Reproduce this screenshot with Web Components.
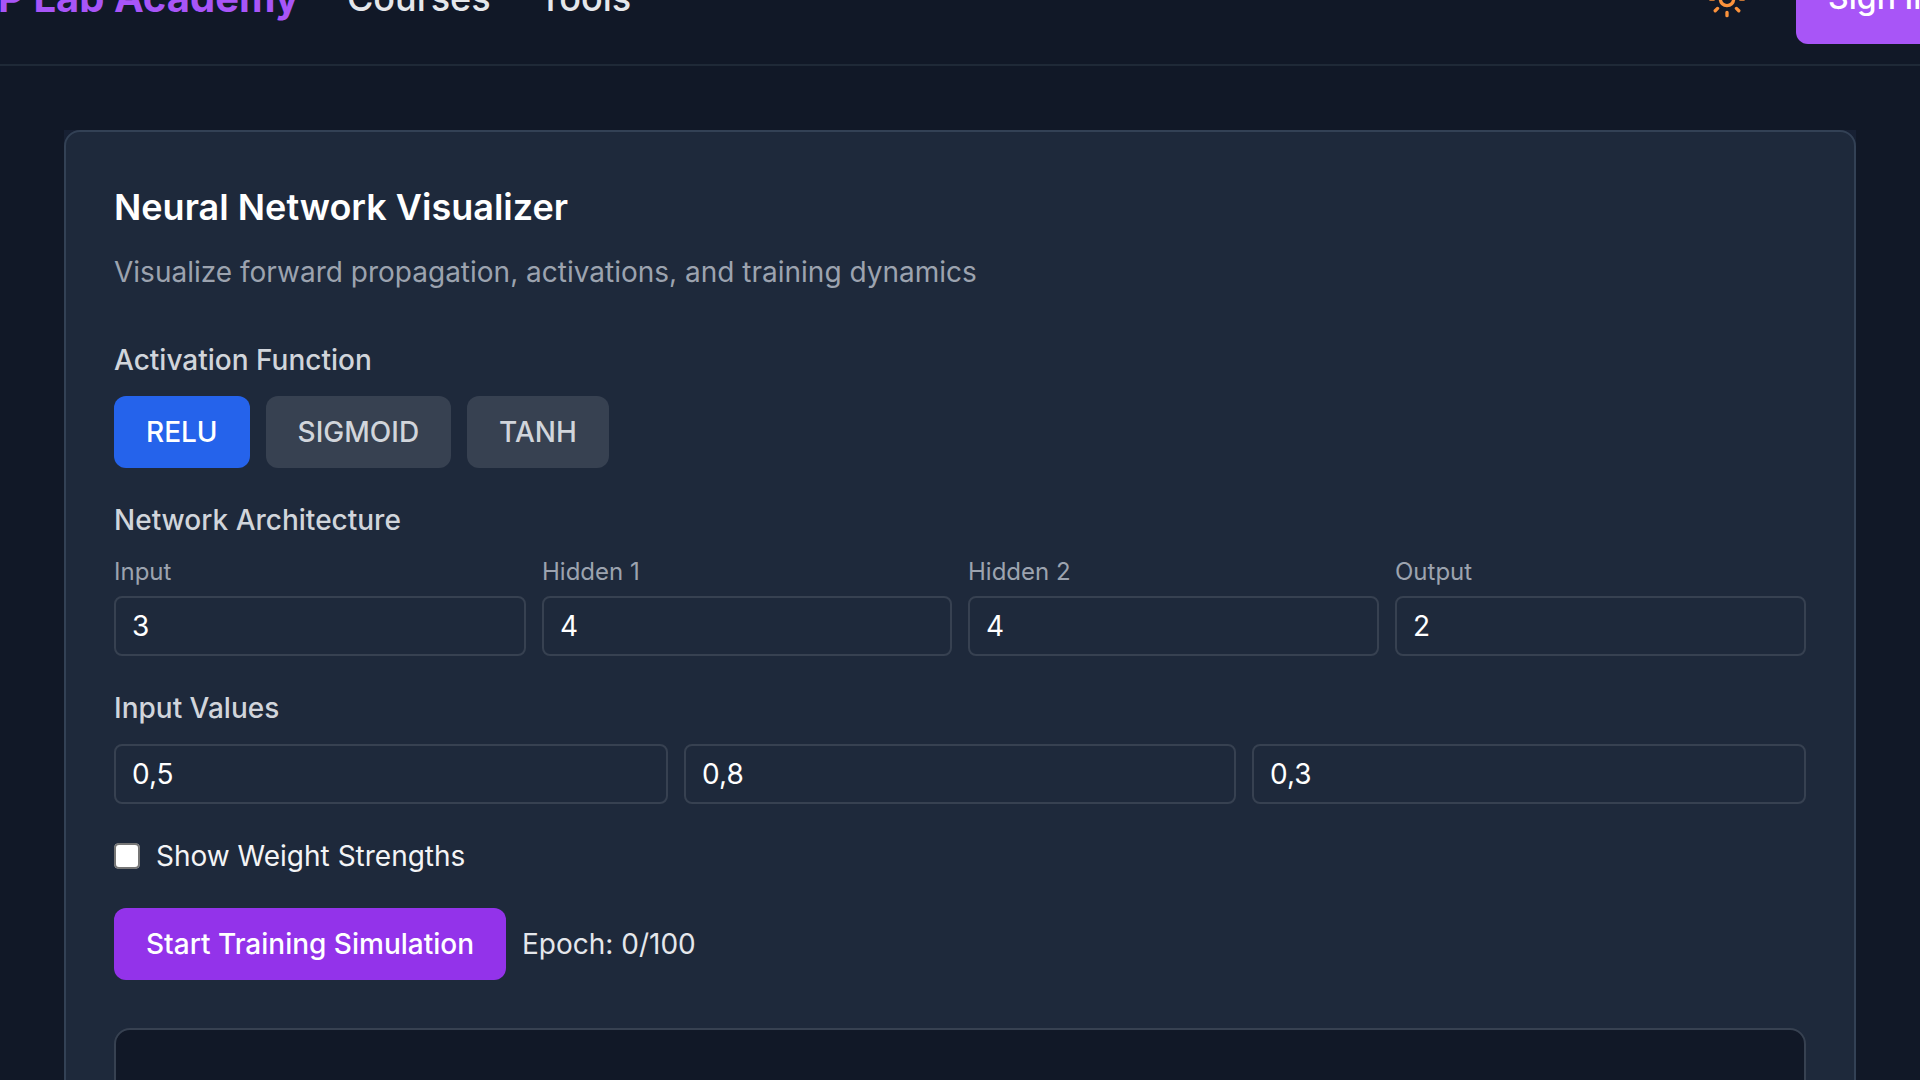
<!DOCTYPE html>
<html lang="en"><head><meta charset="utf-8"><title>Neural Network Visualizer</title>
<style>
html{zoom:2;overflow:hidden;background:#111827}
body{margin:0;height:540px;overflow:hidden;background:#111827;color:#e5e7eb;font-family:Inter,"Liberation Sans",sans-serif;font-size:14px;line-height:20px}
</style></head><body>
<top-nav></top-nav>
<page-main>
  <viz-card title-text="Neural Network Visualizer" sub="Visualize forward propagation, activations, and training dynamics">
    <field-group label="Activation Function">
      <div style="display:flex;gap:8px">
        <ui-button variant="blue">RELU</ui-button>
        <ui-button variant="gray">SIGMOID</ui-button>
        <ui-button variant="gray">TANH</ui-button>
      </div>
    </field-group>
    <field-group label="Network Architecture">
      <div style="display:grid;grid-template-columns:206fr 205fr 205.5fr 205.5fr;gap:8px">
        <num-field label="Input" value="3"></num-field>
        <num-field label="Hidden 1" value="4"></num-field>
        <num-field label="Hidden 2" value="4"></num-field>
        <num-field label="Output" value="2"></num-field>
      </div>
    </field-group>
    <field-group label="Input Values">
      <div style="display:grid;grid-template-columns:277fr 276fr 277fr;gap:8px">
        <num-field value="0,5"></num-field>
        <num-field value="0,8"></num-field>
        <num-field value="0,3"></num-field>
      </div>
    </field-group>
    <check-row>Show Weight Strengths</check-row>
    <div style="display:flex;align-items:center;gap:8px;margin-top:16px">
      <ui-button variant="purple">Start Training Simulation</ui-button>
      <span style="color:#e5e7eb">Epoch: 0/100</span>
    </div>
    <net-canvas></net-canvas>
  </viz-card>
</page-main>
<script>
function def(name, css, html, init){
  customElements.define(name, class extends HTMLElement{
    constructor(){super();const r=this.attachShadow({mode:'open'});r.innerHTML='<style>'+css+'</style>'+html;}
    connectedCallback(){ if(init) init.call(this,this.shadowRoot); }
  });
}
def('top-nav',
 `:host{display:block;height:32px;border-bottom:1px solid #1f2937;overflow:hidden}
  .row{display:flex;align-items:center;height:66px;margin-top:-34px;margin-left:-1px;width:983.2px}
  .logo{font-size:20px;line-height:28px;font-weight:700;color:#a855f7;white-space:nowrap;margin-right:24px}
  a{font-size:18px;line-height:28px;font-weight:500;color:#e5e7eb;text-decoration:none;margin-right:24px}
  .sp{flex:1}
  .sun{width:40px;height:40px;display:flex;align-items:center;justify-content:center;margin:1px 14.5px 0 0}
  svg{width:20px;height:20px;fill:none;stroke:#fb923c;stroke-width:2;stroke-linecap:round;stroke-linejoin:round}
  .btn{background:#a855f7;color:#fff;font-size:16px;line-height:24px;font-weight:500;padding:11px 16px;border-radius:6px;white-space:nowrap}`,
 `<div class="row"><span class="logo">P Lab Academy</span><a>Courses</a><a>Tools</a><span class="sp"></span>
  <span class="sun"><svg viewBox="0 0 24 24"><circle cx="12" cy="12" r="4"/><path d="M12 2v2M12 20v2M4.93 4.93l1.41 1.41M17.66 17.66l1.41 1.41M2 12h2M20 12h2M6.34 17.66l-1.41 1.41M19.07 4.93l-1.41 1.41"/></svg></span>
  <span class="btn">Sign In</span></div>`);
def('page-main',`:host{display:block;padding:32px}`,`<slot></slot>`);
def('viz-card',
 `:host{display:block;background:#172033}
  .card{background:#1e293b;border:1px solid #334155;border-radius:8px;padding:24px}
  h2{margin:-.5px 0 0;font-size:18px;line-height:28px;font-weight:600;color:#fff}
  p{margin:8.5px 0 24px;font-size:14px;line-height:20px;color:#9ca3af}`,
 `<div class="card"><h2></h2><p></p><slot></slot></div>`,
 function(r){r.querySelector('h2').textContent=this.getAttribute('title-text');r.querySelector('p').textContent=this.getAttribute('sub');});
def('field-group',
 `:host{display:block;margin-bottom:16px}
  .l{font-size:14px;line-height:20px;font-weight:500;color:#d1d5db;margin-bottom:8px}`,
 `<div class="l"></div><slot></slot>`,
 function(r){r.querySelector('.l').textContent=this.getAttribute('label');});
def('ui-button',
 `:host{display:inline-block;height:36px;box-sizing:border-box;padding:8px 16px;border-radius:6px;font-size:14px;line-height:20px;font-weight:500;white-space:nowrap}
  :host([variant=blue]){background:#2563eb;color:#fff}
  :host([variant=gray]){background:#374151;color:#d1d5db}
  :host([variant=purple]){background:#9333ea;color:#fff}`,
 `<slot></slot>`);
def('num-field',
 `:host{display:block;min-width:0}
  .l{font-size:12px;line-height:16px;color:#9ca3af;margin-bottom:4px}
  .b{box-sizing:border-box;height:30px;border:1px solid #374151;border-radius:4px;padding:4px 8px;background:#1e293b;color:#fff;font-size:14px;line-height:20px}`,
 `<div class="l"></div><div class="b" role="textbox"></div>`,
 function(r){const l=this.getAttribute('label');const e=r.querySelector('.l');if(l)e.textContent=l;else e.remove();r.querySelector('.b').textContent=this.getAttribute('value');});
def('check-row',
 `:host{display:flex;align-items:center;gap:8px;font-size:14px;line-height:20px;color:#f3f4f6}
  input{margin:0;width:13px;height:13px;color-scheme:light}`,
 `<input type="checkbox" aria-label="Show Weight Strengths"><slot></slot>`);
def('net-canvas',
 `:host{display:block;height:400px;margin-top:24px;background:#111827;border:1px solid #374151;border-radius:8px}`,``);
</script>
</body></html>
